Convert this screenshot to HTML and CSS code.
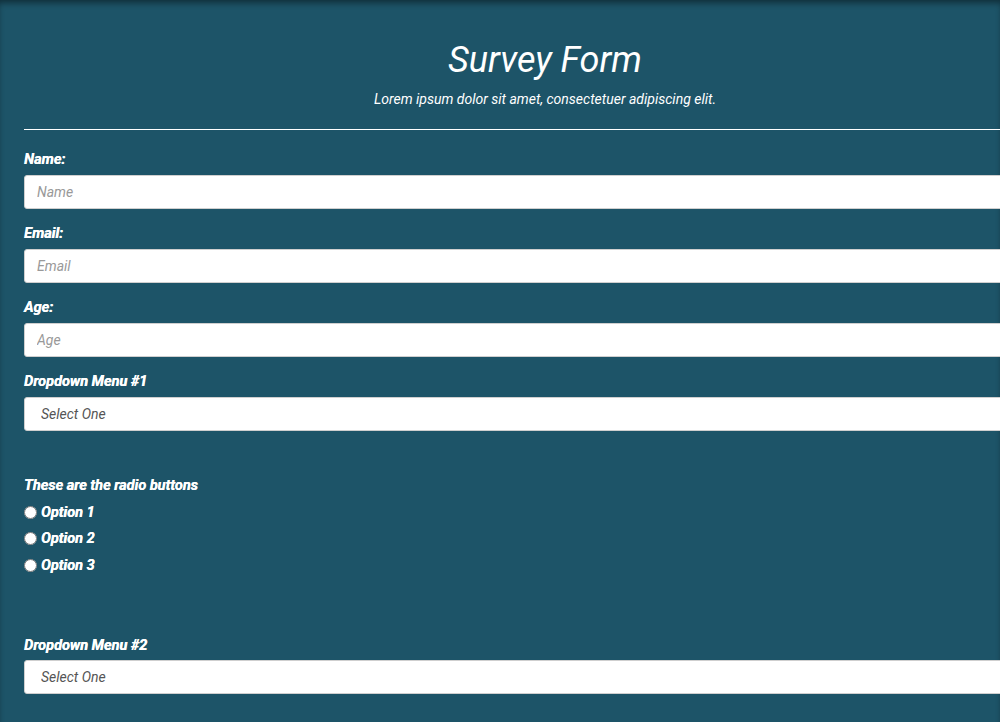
FILE: index.html
```html
<!DOCTYPE html>
<html lang="en">
<head>
<meta charset="utf-8">
<title>Survey Form</title>
<link rel="stylesheet" href="styles.css">
</head>
<body>
<main class="container">
  <header class="header">
    <h1 class="title">Survey Form</h1>
    <p class="description">Lorem ipsum dolor sit amet, consectetuer adipiscing elit.</p>
  </header>
  <hr class="divider">
  <form class="form">
    <div class="field">
      <label class="label" for="name">Name:</label>
      <input class="input" id="name" type="text" placeholder="Name">
    </div>
    <div class="field">
      <label class="label" for="email">Email:</label>
      <input class="input" id="email" type="email" placeholder="Email">
    </div>
    <div class="field">
      <label class="label" for="age">Age:</label>
      <input class="input" id="age" type="number" placeholder="Age">
    </div>
    <div class="field">
      <label class="label" for="dd1">Dropdown Menu #1</label>
      <select class="select" id="dd1">
        <option>Select One</option>
      </select>
    </div>
    <fieldset class="radios">
      <p class="label">These are the radio buttons</p>
      <label class="option"><input class="radio" type="radio" name="opt">Option 1</label>
      <label class="option"><input class="radio" type="radio" name="opt">Option 2</label>
      <label class="option option-last"><input class="radio" type="radio" name="opt">Option 3</label>
    </fieldset>
    <div class="field field-last">
      <label class="label" for="dd2">Dropdown Menu #2</label>
      <select class="select" id="dd2">
        <option>Select One</option>
      </select>
    </div>
  </form>
</main>
</body>
</html>
```

FILE: styles.css
```css
html {
  overflow: hidden;
  background: #1d5468;
}
body {
  margin: 0;
  min-height: 722px;
  background: #1d5468;
  box-shadow: inset 0 5px 6px -2px rgba(0, 0, 0, 0.45);
  font-family: Roboto, "Liberation Sans", sans-serif;
  color: #ffffff;
}
.container {
  width: 1042px;
  padding: 39px 0 20px 24px;
  box-sizing: content-box;
}
.header {
  text-align: center;
}
.title {
  margin: 0;
  font-size: 36px;
  line-height: 43px;
  font-style: italic;
  font-weight: 400;
}
.description {
  margin: 7px 0 0;
  font-size: 14px;
  line-height: 20px;
  font-style: italic;
}
.divider {
  margin: 20px 0 0;
  border: 0;
  border-top: 1px solid #ffffff;
  height: 0;
}
.form {
  display: flex;
  flex-direction: column;
  padding-top: 19px;
}
.field {
  display: flex;
  flex-direction: column;
  margin-bottom: 14px;
}
.label {
  display: block;
  margin: 0 0 5px;
  padding-top: 1px;
  font-size: 14.5px;
  line-height: 20px;
  font-weight: 700;
  font-style: italic;
  text-shadow: 0.3px 0 0 #ffffff;
}
.input,
.select {
  box-sizing: border-box;
  width: 100%;
  height: 34px;
  margin: 0;
  border: 1px solid #cfcfcf;
  border-radius: 3px;
  background: #ffffff;
  font-family: Roboto, "Liberation Sans", sans-serif;
  font-size: 14px;
  font-style: italic;
  color: #444;
  outline: none;
}
.input {
  padding: 0 12px;
}
.input::placeholder {
  color: #999;
  font-style: italic;
}
.select {
  appearance: none;
  -webkit-appearance: none;
  padding: 0 16px;
  color: #555;
}
.radios {
  margin: 30px 0 0;
  padding: 0;
  border: 0;
  display: flex;
  flex-direction: column;
}
.radios .label {
  margin-bottom: 3px;
}
.option {
  display: flex;
  align-items: center;
  height: 26px;
  font-size: 14.5px;
  font-weight: 700;
  font-style: italic;
  text-shadow: 0.3px 0 0 #ffffff;
}
.option-last {
  padding-top: 1px;
}
.radio {
  width: 13px;
  height: 13px;
  margin: 0 4px 0 0;
}
.field-last {
  margin-top: 57px;
}
.field-last .label {
  margin-bottom: 4px;
}
```
